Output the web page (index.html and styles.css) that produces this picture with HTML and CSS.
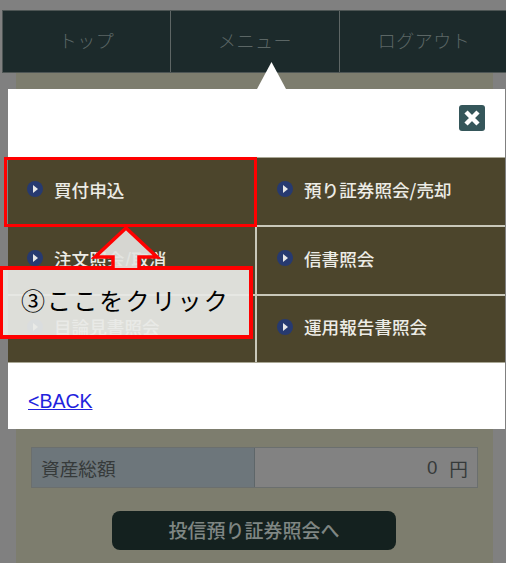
FILE: index.html
```html
<!DOCTYPE html>
<html lang="ja">
<head>
<meta charset="utf-8">
<title>メニュー</title>
<link rel="stylesheet" href="styles.css">
</head>
<body>
<div class="page">
  <nav class="nav">
    <a class="nav-item">トップ</a>
    <a class="nav-item">メニュー</a>
    <a class="nav-item">ログアウト</a>
  </nav>
  <main class="panel">
    <div class="asset-table">
      <div class="asset-label">資産総額</div>
      <div class="asset-value"><span class="asset-num">0</span>円</div>
    </div>
    <a class="panel-button">投信預り証券照会へ</a>
  </main>

  <section class="modal">
    <div class="modal-pointer"></div>
    <div class="modal-head">
      <svg class="close" viewBox="0 0 26 26" width="26" height="26">
        <rect width="26" height="26" rx="3" fill="#35565a"/>
        <path d="M7 7 L19 19 M19 7 L7 19" stroke="#fff" stroke-width="4.5"/>
      </svg>
    </div>
    <div class="menu">
      <a class="menu-item"><span class="bullet"></span>買付申込</a>
      <a class="menu-item"><span class="bullet"></span>預り証券照会/売却</a>
      <a class="menu-item"><span class="bullet"></span>注文照会/取消</a>
      <a class="menu-item"><span class="bullet"></span>信書照会</a>
      <a class="menu-item"><span class="bullet"></span>目論見書照会</a>
      <a class="menu-item"><span class="bullet"></span>運用報告書照会</a>
    </div>
    <div class="modal-foot"><a class="back" href="#">&lt;BACK</a></div>
  </section>

  <div class="highlight"></div>
  <div class="callout">③ここをクリック</div>
  <svg class="callout-arrow" viewBox="0 0 70 44" width="70" height="44">
    <path d="M4 31 L35 2 L66 31 H48 V42 H22 V31 Z" fill="rgba(226,227,223,0.92)"/>
    <path d="M22 42 V31 H4 L35 2 L66 31 H48 V42" fill="none" stroke="#f00" stroke-width="3.5"/>
  </svg>
</div>
</body>
</html>
```
FILE: styles.css
```css
* { box-sizing: border-box; }
html, body { margin: 0; padding: 0; }
body { font-family: "Liberation Sans", "Noto Sans CJK JP", sans-serif; }
.page {
  position: relative;
  width: 506px;
  height: 563px;
  overflow: hidden;
  background: #808080;
  padding-top: 10px;
}
.nav {
  display: grid;
  grid-template-columns: 167px 169px 169px;
  height: 63px;
  margin-left: 2px;
  width: 506px;
  background: #1c2a2b;
  border: 1px solid #4d5554;
}
.nav-item {
  display: flex;
  align-items: center;
  justify-content: center;
  font-size: 18px;
  color: #5b6665;
  letter-spacing: 0.5px;
  font-family: "Noto Sans CJK JP", sans-serif;
  font-weight: 300;
  padding-bottom: 4px;
}
.nav-item + .nav-item { border-left: 1px solid #5e6665; }
.panel {
  margin: 0 13px 0 16px;
  height: 490px;
  background: #7d7d6e;
  padding: 374px 15px 0;
}
.asset-table {
  display: grid;
  grid-template-columns: 223px 1fr;
  height: 41px;
  border: 1px solid #6b6f6e;
  font-family: "Noto Sans CJK JP", sans-serif;
  font-size: 18.7px;
  color: #363a3a;
}
.asset-label {
  display: flex;
  align-items: center;
  padding-left: 9px;
  background: #6d767b;
  border-right: 1px solid #5e6669;
}
.asset-value {
  display: flex;
  align-items: center;
  justify-content: flex-end;
  gap: 12px;
  padding-right: 9px;
  background: #828282;
}
.asset-num { font-family: "Liberation Sans", sans-serif; }
.panel-button {
  display: flex;
  align-items: center;
  justify-content: center;
  width: 284px;
  height: 39px;
  margin: 23px 0 0 81px;
  border-radius: 8px;
  background: #14211f;
  color: #7f8683;
  font-family: "Noto Sans CJK JP", sans-serif;
  font-size: 19px;
  font-weight: 500;
  padding-bottom: 3px;
}
.modal {
  position: absolute;
  left: 8px;
  top: 89px;
  width: 497px;
  height: 340px;
  background: #fff;
  display: flex;
  flex-direction: column;
}
.modal-pointer {
  position: absolute;
  left: 249px;
  top: -27px;
  width: 29px;
  height: 27px;
  background: #fff;
  clip-path: polygon(50% 0, 100% 100%, 0 100%);
}
.modal-head {
  height: 68px;
  display: flex;
  justify-content: flex-end;
  align-items: flex-start;
  padding: 16px 20px 0 0;
}
.close { display: block; }
.menu {
  display: grid;
  grid-template-columns: 249px 1fr;
  grid-template-rows: 67px 69px 68px;
  background: #4c452c;
  border-top: 1px solid #a9a795;
  border-bottom: 1px solid #a9a795;
  height: 206px;
}
.menu-item {
  display: flex;
  align-items: center;
  color: #ecece6;
  font-family: "Noto Sans CJK JP", sans-serif;
  font-size: 17.6px;
  font-weight: 500;
  padding: 0 0 5px 19px;
}
.menu-item:nth-child(odd) { border-right: 2px solid #c9c8ba; }
.menu-item:nth-child(n+3) { border-top: 2px solid #c9c8ba; }
.menu-item:nth-child(even) { padding-left: 20px; }
.bullet {
  position: relative;
  width: 16px;
  height: 16px;
  border-radius: 50%;
  background: #273a70;
  margin-right: 11px;
  flex: none;
}
.bullet::after {
  content: "";
  position: absolute;
  left: 6px;
  top: 4px;
  border-left: 5px solid #e8e8e8;
  border-top: 4px solid transparent;
  border-bottom: 4px solid transparent;
}
.modal-foot {
  flex: 1;
  padding: 27px 0 0 20px;
}
.back {
  font-size: 19.5px;
  color: #2222dd;
  text-decoration: underline;
}
.highlight {
  position: absolute;
  left: 4px;
  top: 157px;
  width: 253px;
  height: 70px;
  border: 3px solid #f00;
}
.callout-arrow {
  position: absolute;
  left: 91px;
  top: 226px;
}
.callout {
  position: absolute;
  left: 0;
  top: 266px;
  width: 253px;
  height: 73px;
  border: 4px solid #f00;
  border-left-width: 3px;
  background: rgba(232, 233, 230, 0.93);
  color: #000;
  font-family: "Noto Sans CJK JP", serif;
  font-size: 24px;
  line-height: 60px;
  padding-left: 18px;
  letter-spacing: 2.1px;
  white-space: nowrap;
}
```
